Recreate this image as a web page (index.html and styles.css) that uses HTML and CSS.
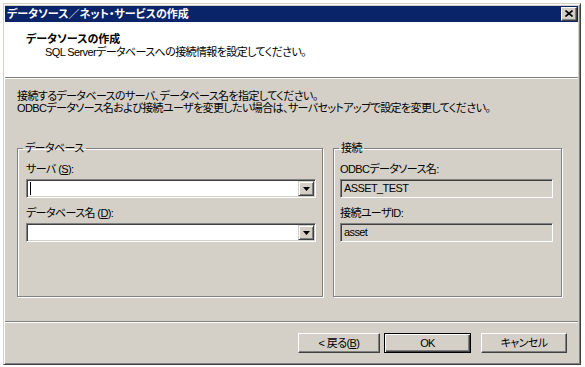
FILE: index.html
```html
<!DOCTYPE html>
<html lang="ja">
<head>
<meta charset="utf-8">
<title>データソース／ネット・サービスの作成</title>
<link rel="stylesheet" href="styles.css">
</head>
<body>
<div class="window">
  <div class="titlebar">
    <span class="title">データソース／ネット・サービスの作成</span>
    <span class="close"><svg width="8" height="7" viewBox="0 0 8 7"><path d="M0.5 0.5 L7.5 6.5 M7.5 0.5 L0.5 6.5" stroke="#000" stroke-width="1.6" fill="none"/></svg></span>
  </div>
  <div class="header">
    <div class="h-title">データソースの作成</div>
    <div class="h-sub">SQL Serverデータベースへの接続情報を設定してください。</div>
  </div>
  <div class="body">
    <p class="intro">接続するデータベースのサーバ、データベース名を指定してください。<br>ODBCデータソース名および接続ユーザを変更したい場合は、サーバセットアップで設定を変更してください。</p>
    <div class="groups">
      <fieldset class="group group-db">
        <legend>データベース</legend>
        <div class="group-inner inner-db">
          <div class="label">サーバ (<u>S</u>):</div>
          <div class="combo"><span class="caret"></span><span class="drop"><svg width="7" height="4" viewBox="0 0 7 4"><path d="M0 0 H7 L3.5 4 Z" fill="#000"/></svg></span></div>
          <div class="label label-2">データベース名 (<u>D</u>):</div>
          <div class="combo"><span class="drop"><svg width="7" height="4" viewBox="0 0 7 4"><path d="M0 0 H7 L3.5 4 Z" fill="#000"/></svg></span></div>
        </div>
      </fieldset>
      <fieldset class="group group-conn">
        <legend>接続</legend>
        <div class="group-inner inner-conn">
          <div class="label">ODBCデータソース名:</div>
          <div class="field">ASSET_TEST</div>
          <div class="label label-2">接続ユーザID:</div>
          <div class="field">asset</div>
        </div>
      </fieldset>
    </div>
    <div class="sep"></div>
    <div class="buttons">
      <button class="btn btn-back">&lt; 戻る(<u>B</u>)</button>
      <button class="btn btn-ok">OK</button>
      <button class="btn btn-cancel">キャンセル</button>
    </div>
  </div>
</div>
</body>
</html>
```
FILE: styles.css
```css
* { box-sizing: border-box; }
html, body { margin: 0; padding: 0; background: #fff; }
body {
  font-family: "Liberation Sans", "Noto Sans CJK JP", sans-serif;
  font-size: 11px;
  line-height: 12px;
  letter-spacing: -0.6px;
  color: #000;
  font-feature-settings: "palt";
}
.window {
  margin: 3px 0 0 3px;
  width: 578px;
  height: 362px;
  background: #d4d0c8;
  border: 1px solid;
  border-color: #d4d0c8 #404040 #404040 #d4d0c8;
  box-shadow: inset 1px 1px #fff, inset -1px -1px #808080;
  padding: 2px 2px 2px 1px;
  display: flex;
  flex-direction: column;
}
.titlebar {
  height: 16px;
  flex: none;
  background: #0a246a;
  color: #fff;
  font-weight: bold;
  letter-spacing: 0;
  display: flex;
  align-items: center;
  justify-content: space-between;
  padding: 0 1px 0 2px;
}
.title { line-height: 14px; }
.close {
  width: 16px;
  height: 14px;
  background: #d4d0c8;
  border: 1px solid;
  border-color: #fff #404040 #404040 #fff;
  box-shadow: inset -1px -1px #808080;
  display: flex;
  align-items: center;
  justify-content: center;
  padding: 0 1px 1px 0;
}
.close svg { display: block; }
.header {
  flex: none;
  height: 56px;
  background: #fff;
  border-bottom: 1px solid #808080;
  padding: 11px 0 0 21px;
}
.h-title { font-weight: bold; line-height: 13px; letter-spacing: 0; }
.h-sub { line-height: 13px; padding-left: 19px; }
.body {
  flex: 1;
  border-top: 1px solid #fff;
  padding-top: 11px;
  display: flex;
  flex-direction: column;
}
.intro { margin: 0 0 0 12px; line-height: 12px; }
.groups {
  display: flex;
  gap: 10px;
  margin: 28px 0 0 12px;
}
.group {
  margin: 0;
  padding: 0;
  min-width: 0;
  height: 155px;
  border: 1px solid #808080;
  box-shadow: inset 1px 1px #fff, 1px 1px #fff;
}
.group legend {
  margin-left: 5px;
  padding: 0 2px;
  line-height: 12px;
}
.group-db { width: 306px; }
.group-conn { width: 229px; }
.group-inner { padding-top: 9px; }
.inner-db { padding-left: 8px; padding-right: 6px; }
.inner-conn { padding-left: 6px; padding-right: 8px; }
.label { line-height: 12px; margin-bottom: 4px; }
.label-2 { margin-top: 9px; }
.combo {
  height: 19px;
  background: #fff;
  border: 1px solid;
  border-color: #808080 #fff #fff #808080;
  box-shadow: inset 1px 1px #404040, inset -1px -1px #d4d0c8;
  padding: 1px;
  display: flex;
  justify-content: flex-end;
  align-items: stretch;
}
.caret {
  width: 1px;
  height: 13px;
  background: #000;
  align-self: center;
  margin: 0 auto 0 2px;
}
.drop {
  width: 16px;
  background: #d4d0c8;
  border: 1px solid;
  border-color: #d4d0c8 #404040 #404040 #d4d0c8;
  box-shadow: inset 1px 1px #fff, inset -1px -1px #808080;
  display: flex;
  align-items: center;
  justify-content: center;
  padding-top: 1px;
}
.drop svg { display: block; }
.field {
  height: 19px;
  background: #d4d0c8;
  border: 1px solid;
  border-color: #808080 #fff #fff #808080;
  box-shadow: inset 1px 1px #404040, inset -1px -1px #d4d0c8;
  padding: 0 0 0 3px;
  line-height: 17px;
}
.sep {
  margin-top: 24px;
  height: 2px;
  border-top: 1px solid #808080;
  border-bottom: 1px solid #fff;
}
.buttons {
  margin-top: 10px;
  display: flex;
  justify-content: flex-end;
  padding-right: 11px;
}
.btn {
  height: 20px;
  font: inherit;
  line-height: 12px;
  letter-spacing: inherit;
  color: #000;
  background: #d4d0c8;
  border: 1px solid;
  border-color: #fff #404040 #404040 #fff;
  box-shadow: inset -1px -1px #808080;
  padding: 0;
}
.btn-back { width: 82px; }
.btn-ok {
  width: 87px;
  margin-left: 4px;
  border-color: #000;
  box-shadow: inset 1px 1px #fff, inset -1px -1px #404040, inset -2px -2px #808080;
}
.btn-cancel { width: 86px; margin-left: 10px; }
```
